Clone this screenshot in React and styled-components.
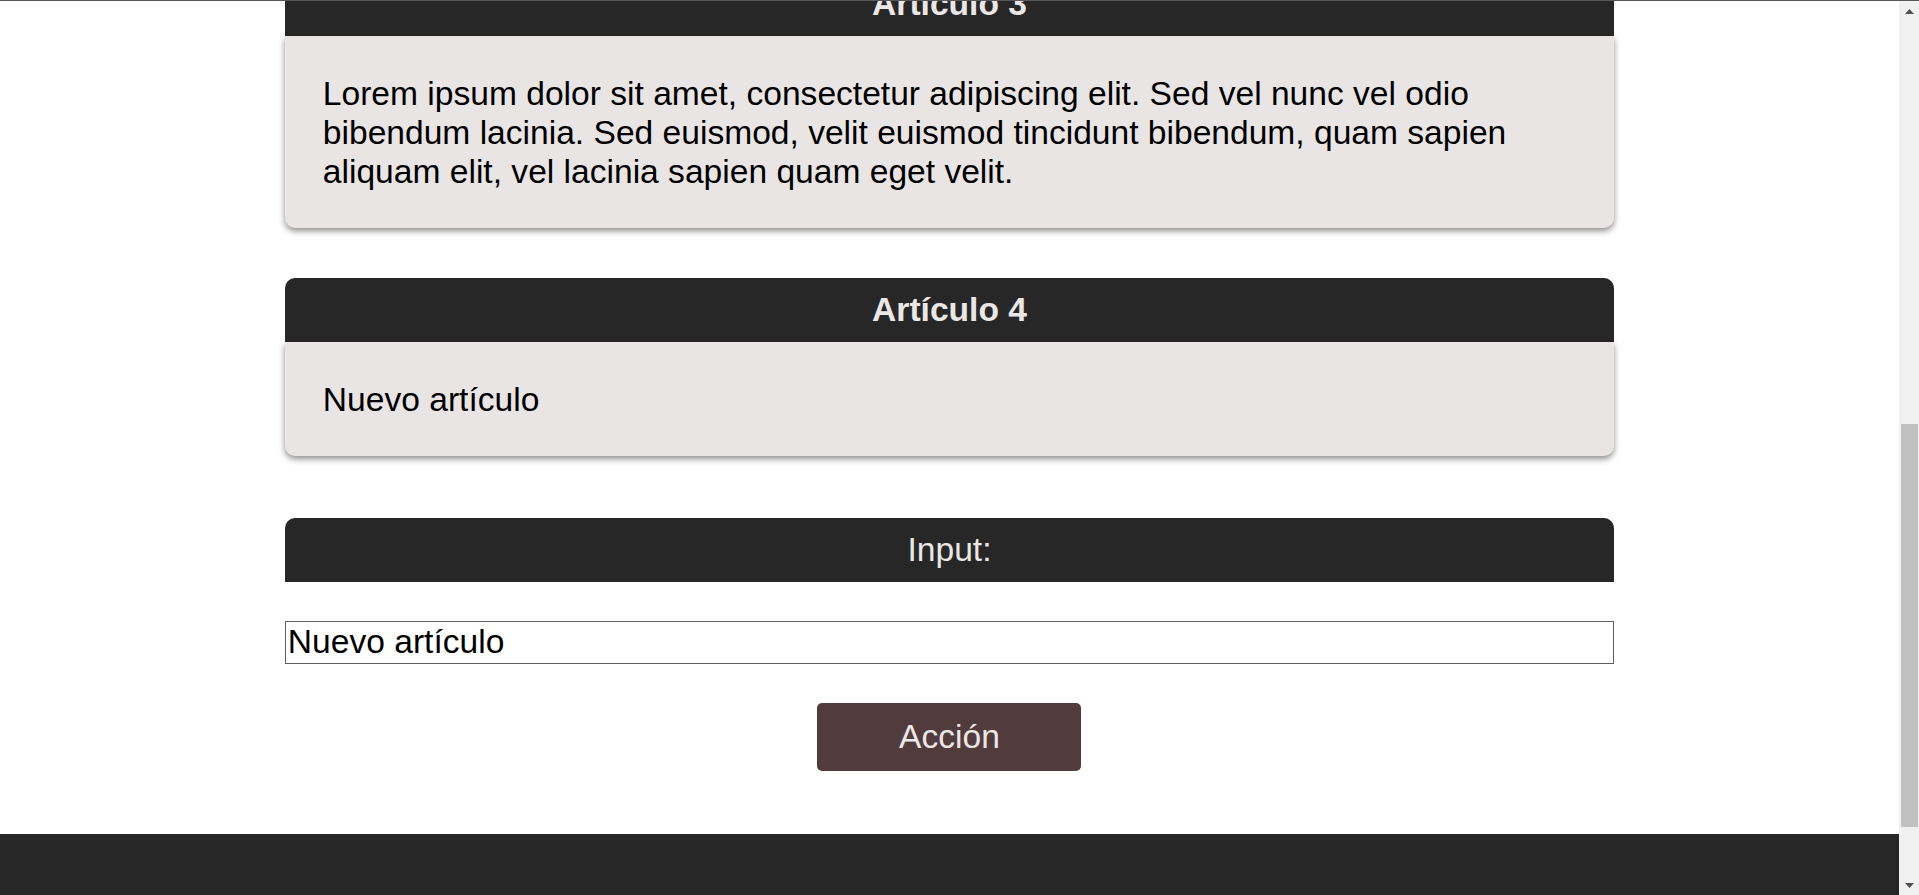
import React, { useLayoutEffect, useRef, useState } from 'react';
import styled, { createGlobalStyle } from 'styled-components';

const lorem =
  'Lorem ipsum dolor sit amet, consectetur adipiscing elit. Sed vel nunc vel odio bibendum lacinia. Sed euismod, velit euismod tincidunt bibendum, quam sapien aliquam elit, vel lacinia sapien quam eget velit.';

const articles = [
  { id: 1, title: 'Artículo 1', body: lorem },
  { id: 2, title: 'Artículo 2', body: lorem },
  { id: 3, title: 'Artículo 3', body: lorem },
  { id: 4, title: 'Artículo 4', body: 'Nuevo artículo' },
];

const App = () => {
  const pageRef = useRef(null);
  const anchorRef = useRef(null);
  const trackRef = useRef(null);
  const [thumb, setThumb] = useState({ top: 403, height: 403 });
  const [value, setValue] = useState('Nuevo artículo');

  // page is shown scrolled down, with the 3rd article's title half hidden
  useLayoutEffect(() => {
    const page = pageRef.current;
    page.scrollTop = anchorRef.current.offsetTop + 29;
    const track = trackRef.current.clientHeight;
    const height = (track * page.clientHeight) / page.scrollHeight;
    const max = page.scrollHeight - page.clientHeight;
    const top = max > 0 ? (page.scrollTop / max) * (track - height) : 0;
    setThumb({ top, height });
  }, []);

  return (
    <>
      <GlobalStyle />
      <Frame>
        <Page ref={pageRef}>
          <Main>
            {articles.map((a) => (
              <Card key={a.id} ref={a.id === 3 ? anchorRef : null}>
                <CardTitle as='h2'>{a.title}</CardTitle>
                <CardBody>{a.body}</CardBody>
              </Card>
            ))}

            <InputBlock>
              <CardTitle $light>Input:</CardTitle>
              <TextInput value={value} onChange={(e) => setValue(e.target.value)} />
              <ActionButton>Acción</ActionButton>
            </InputBlock>
          </Main>
          <Footer />
        </Page>

        <Scrollbar>
          <ArrowButton>
            <svg width='9' height='5' viewBox='0 0 9 5'>
              <path d='M0 5 L4.5 0 L9 5 Z' fill='#505050' />
            </svg>
          </ArrowButton>
          <Track ref={trackRef}>
            <Thumb style={{ marginTop: thumb.top, height: thumb.height }} />
          </Track>
          <ArrowButton>
            <svg width='9' height='5' viewBox='0 0 9 5'>
              <path d='M0 0 L9 0 L4.5 5 Z' fill='#505050' />
            </svg>
          </ArrowButton>
        </Scrollbar>
      </Frame>
    </>
  );
};

const GlobalStyle = createGlobalStyle`
  html, body {
    margin: 0;
    height: 100%;
    overflow: hidden;
  }

  body {
    font-family: "Liberation Sans", Arial, sans-serif;
    font-size: 33.6px;
    background: #fff;
    color: #000;
  }

  * {
    box-sizing: border-box;
  }
`;

const Frame = styled.div`
  display: flex;
  height: 100vh;
  border-top: 1px solid #575757;
`;

const Page = styled.div`
  position: relative;
  flex: 1;
  overflow: hidden;
`;

const Main = styled.main`
  width: 70%;
  margin: 0 auto;
  padding: 253px 0 63px;
`;

const Card = styled.article`
  margin-bottom: 50px;

  &:last-of-type {
    margin-bottom: 62px;
  }
`;

const CardTitle = styled.div`
  margin: 0;
  height: 64px;
  display: flex;
  align-items: center;
  justify-content: center;
  background: #272727;
  color: #ebe7e6;
  font-size: 33.6px;
  font-weight: ${(p) => (p.$light ? 400 : 700)};
  line-height: 1.15;
  border-radius: 10px 10px 0 0;
`;

const CardBody = styled.p`
  margin: 0;
  padding: 37.5px 38px;
  background: #e9e5e4;
  line-height: 39px;
  border-radius: 0 0 10px 10px;
  box-shadow: 0 3px 6px rgba(0, 0, 0, 0.45);
`;

const InputBlock = styled.section`
  display: flex;
  flex-direction: column;
`;

const TextInput = styled.input`
  width: 100%;
  margin: 39px 0;
  padding: 1px 2px;
  border: 1px solid #5f5f5f;
  font-family: inherit;
  font-size: 33.6px;
  line-height: 1.15;
  color: #000;
  background: #fff;
  outline: none;
`;

const ActionButton = styled.button`
  align-self: center;
  width: 264px;
  height: 68px;
  border: none;
  border-radius: 5px;
  background: #523b3d;
  color: #ebe7e6;
  font-family: inherit;
  font-size: 33.6px;
  cursor: pointer;
`;

const Footer = styled.footer`
  height: 168px;
  background: #272727;
`;

const Scrollbar = styled.div`
  width: 20px;
  display: flex;
  flex-direction: column;
  background: #f0f0f0;
`;

const ArrowButton = styled.div`
  height: 20px;
  display: flex;
  align-items: center;
  justify-content: center;
  padding-left: 1px;
`;

const Track = styled.div`
  flex: 1;
  padding: 0 1px 0 2px;
`;

const Thumb = styled.div`
  background: #c0c0c0;
`;

export default App;
